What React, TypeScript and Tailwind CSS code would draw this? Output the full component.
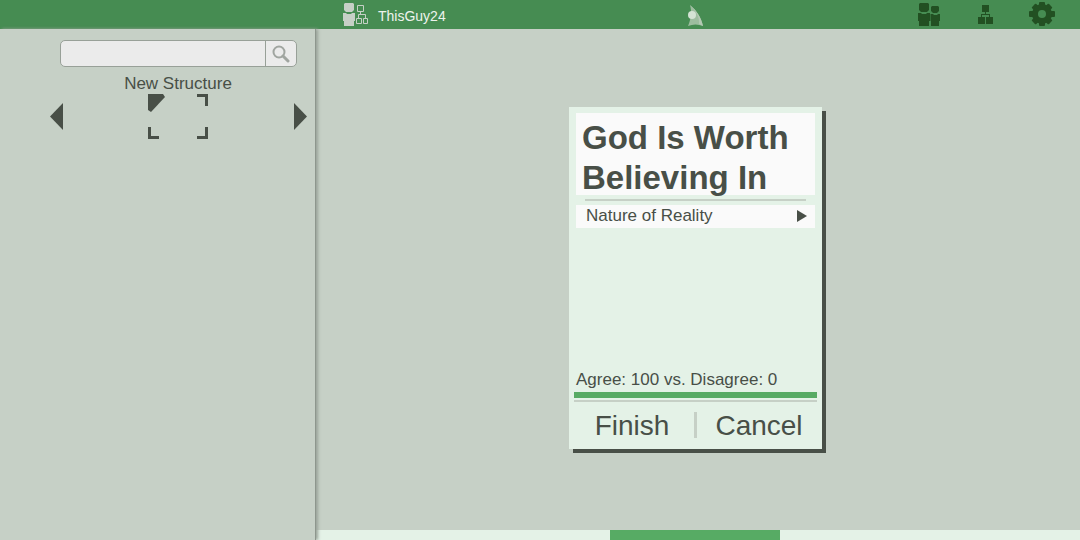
import React from "react";

function ProfileIcon() {
  return (
    <svg width="26" height="24" viewBox="0 0 26 24" fill="currentColor" aria-hidden="true">
      <path d="M2 0h8l1 1v6l-2 2H3L1 7V1z" />
      <path d="M0 10h3l1 1h4l1-1h3v8h-1v5H1v-5H0z" />
      <path d="M14.500 2.500h6v6h-6zM13.500 15.500h5v5h-5zM20.500 15.500h4v5h-4zM17.500 8.500v3M15.500 15v-3.500h7V15" fill="none" stroke="currentColor" />
    </svg>
  );
}

function LogoIcon() {
  return (
    <svg width="18" height="22" viewBox="0 0 18 22" aria-hidden="true">
      <path d="M3 0C10 6 14 12 16 21C11 19 6 19 1 21C4 14 5 7 3 0Z" fill="#9dbd9f" />
      <path d="M3 0C10 6 14 12 16 21L12 19C13 12 8 5 3 0Z" fill="#b3c9b3" />
      <circle cx="5" cy="10" r="4" fill="#d4e3d4" />
    </svg>
  );
}

function PeopleIcon() {
  return (
    <svg width="24" height="24" viewBox="0 0 24 24" fill="currentColor" aria-hidden="true">
      <path d="M2 0h8l1 1v6l-2 2H3L1 7V1z" />
      <path d="M0 10h3l1 1h4l1-1h3v8h-1v5H1v-5H0z" />
      <path d="M14 3h6l1 1v4l-2 2h-4l-2-2V4z" />
      <path d="M12.500 11H15l1 1h3l1-1h2v7h-1v5h-8v-5h-.5z" />
    </svg>
  );
}

function StructureIcon() {
  return (
    <svg width="15" height="20" viewBox="0 0 15 20" fill="currentColor" aria-hidden="true">
      <path d="M4 0h7v7H4zM0 12h7v7H0zM8 12h7v7H8zM7 7h1v3H7zM3 9h9v1H3zM3 9h1v3H3zM11 9h1v3h-1z" />
    </svg>
  );
}

function GearIcon() {
  return (
    <svg width="26" height="24" viewBox="0 0 26 24" className="-translate-y-px" aria-hidden="true">
      <g fill="currentColor">
        <rect x="10" y="0" width="6" height="24" rx="1" />
        <rect x="0" y="9" width="26" height="6" rx="1" />
        <rect x="10" y="0" width="6" height="24" rx="1" transform="rotate(45 13 12)" />
        <rect x="10" y="0" width="6" height="24" rx="1" transform="rotate(-45 13 12)" />
        <circle cx="13" cy="12" r="10" />
      </g>
      <circle cx="13" cy="12" r="4" fill="#468c52" />
    </svg>
  );
}

function FrameIcon() {
  return (
    <svg width="60" height="45" viewBox="0 0 60 45" fill="currentColor" aria-hidden="true">
      <path d="M0 0h15l2 3L3 18l-3-2z" />
      <path d="M49 0h11v12h-3V3h-8zM0 33h3v9h8v3H0zM57 33h3v12H49v-3h8z" />
    </svg>
  );
}

export default function App() {
  return (
    <div className="flex min-h-screen flex-col bg-[#c6d0c6] font-['Liberation_Sans',Arial,sans-serif] text-[#484f47]">
      <header className="grid h-[29px] grid-cols-[1fr_auto_1fr] items-center bg-[#468c52] pl-[316px]">
        <a href="#profile" className="ml-[27px] flex items-center gap-[9px] text-sm text-[#edf3ed]">
          <span className="text-[#c6d0c6]"><ProfileIcon /></span>
          <span className="pt-0.5">ThisGuy24</span>
        </a>
        <a href="#home" aria-label="Home" className="pt-0.5 pr-1"><LogoIcon /></a>
        <nav className="flex items-center justify-end gap-9 pr-[25px] text-[#225022]">
          <button type="button" aria-label="People"><PeopleIcon /></button>
          <button type="button" aria-label="Structures"><StructureIcon /></button>
          <button type="button" aria-label="Settings"><GearIcon /></button>
        </nav>
      </header>

      <div className="flex grow">
        <aside className="z-10 w-[316px] shrink-0 border-r border-[#8d968d] pt-[11px] shadow-[2px_0_3px_#99a399]">
          <form role="search" className="mr-[18px] ml-[60px] flex h-[27px] overflow-hidden rounded-[5px] border border-[#98a098] bg-[#ebebeb]">
            <input type="text" aria-label="Search" className="min-w-0 grow px-2 text-sm outline-none" />
            <button type="button" aria-label="Submit search" className="flex w-[31px] items-center justify-center border-l border-[#98a098] text-[#a0a5a0]">
              <svg width="18" height="18" viewBox="0 0 18 18" fill="none" stroke="currentColor" aria-hidden="true">
                <circle cx="7" cy="7" r="5.500" strokeWidth="2" />
                <path d="M11 11l5 5" strokeWidth="3" strokeLinecap="round" />
              </svg>
            </button>
          </form>
          <section className="mt-[6px] mr-2 ml-[49px]">
            <h2 className="text-center text-[17px] leading-[21px]">New Structure</h2>
            <div className="flex items-center justify-between">
              <button type="button" aria-label="Previous structure">
                <svg width="14" height="27" viewBox="0 0 14 27" fill="currentColor" aria-hidden="true"><path d="M14 0v27L1 13.500z" /></svg>
              </button>
              <button type="button" aria-label="Create structure"><FrameIcon /></button>
              <button type="button" aria-label="Next structure">
                <svg width="14" height="27" viewBox="0 0 14 27" fill="currentColor" aria-hidden="true"><path d="M1 0v27l13-13.500z" /></svg>
              </button>
            </div>
          </section>
        </aside>

        <main className="flex grow flex-col">
          <div className="flex grow items-center justify-center pr-[5px] pb-1">
            <article className="flex min-h-[342px] w-[253px] flex-col bg-[#e4f2e7] px-[5px] pt-[6px] shadow-[4px_4px_0_#484f47]">
              <h1 className="mx-[2px] h-[82px] bg-[#fafafa] px-[6px] pt-[5px] text-[33px] leading-10 font-bold">God Is Worth Believing In</h1>
              <div className="mx-[11px] mt-1 h-[2px] bg-[#c6d0c6]" />
              <button type="button" className="mx-[2px] mt-1 flex h-[23px] items-center justify-between bg-[#fafafa] pr-2 pl-[10px] text-[17px] leading-5">
                <span>Nature of Reality</span>
                <svg width="10" height="12" viewBox="0 0 10 12" fill="currentColor" aria-hidden="true"><path d="M0 0v12l10-6z" /></svg>
              </button>
              <div className="grow" />
              <p className="pl-[2px] text-[17px] leading-[25px]">Agree: 100 vs. Disagree: 0</p>
              <div className="h-[6px] bg-[#57ab64]" />
              <div className="mt-[2px] h-[2px] bg-[#c6d0c6]" />
              <div className="flex h-[47px] items-center text-[28px] leading-8">
                <button type="button" className="flex-1 pt-0.5 pr-1">Finish</button>
                <div className="h-[26px] w-[3px] bg-[#c6d0c6]" />
                <button type="button" className="flex-1 pt-0.5 pl-1">Cancel</button>
              </div>
            </article>
          </div>
          <div className="flex h-[10px] justify-center bg-[#e4f2e7] pr-[6px]">
            <div className="w-[170px] bg-[#57ab64]" />
          </div>
        </main>
      </div>
    </div>
  );
}
